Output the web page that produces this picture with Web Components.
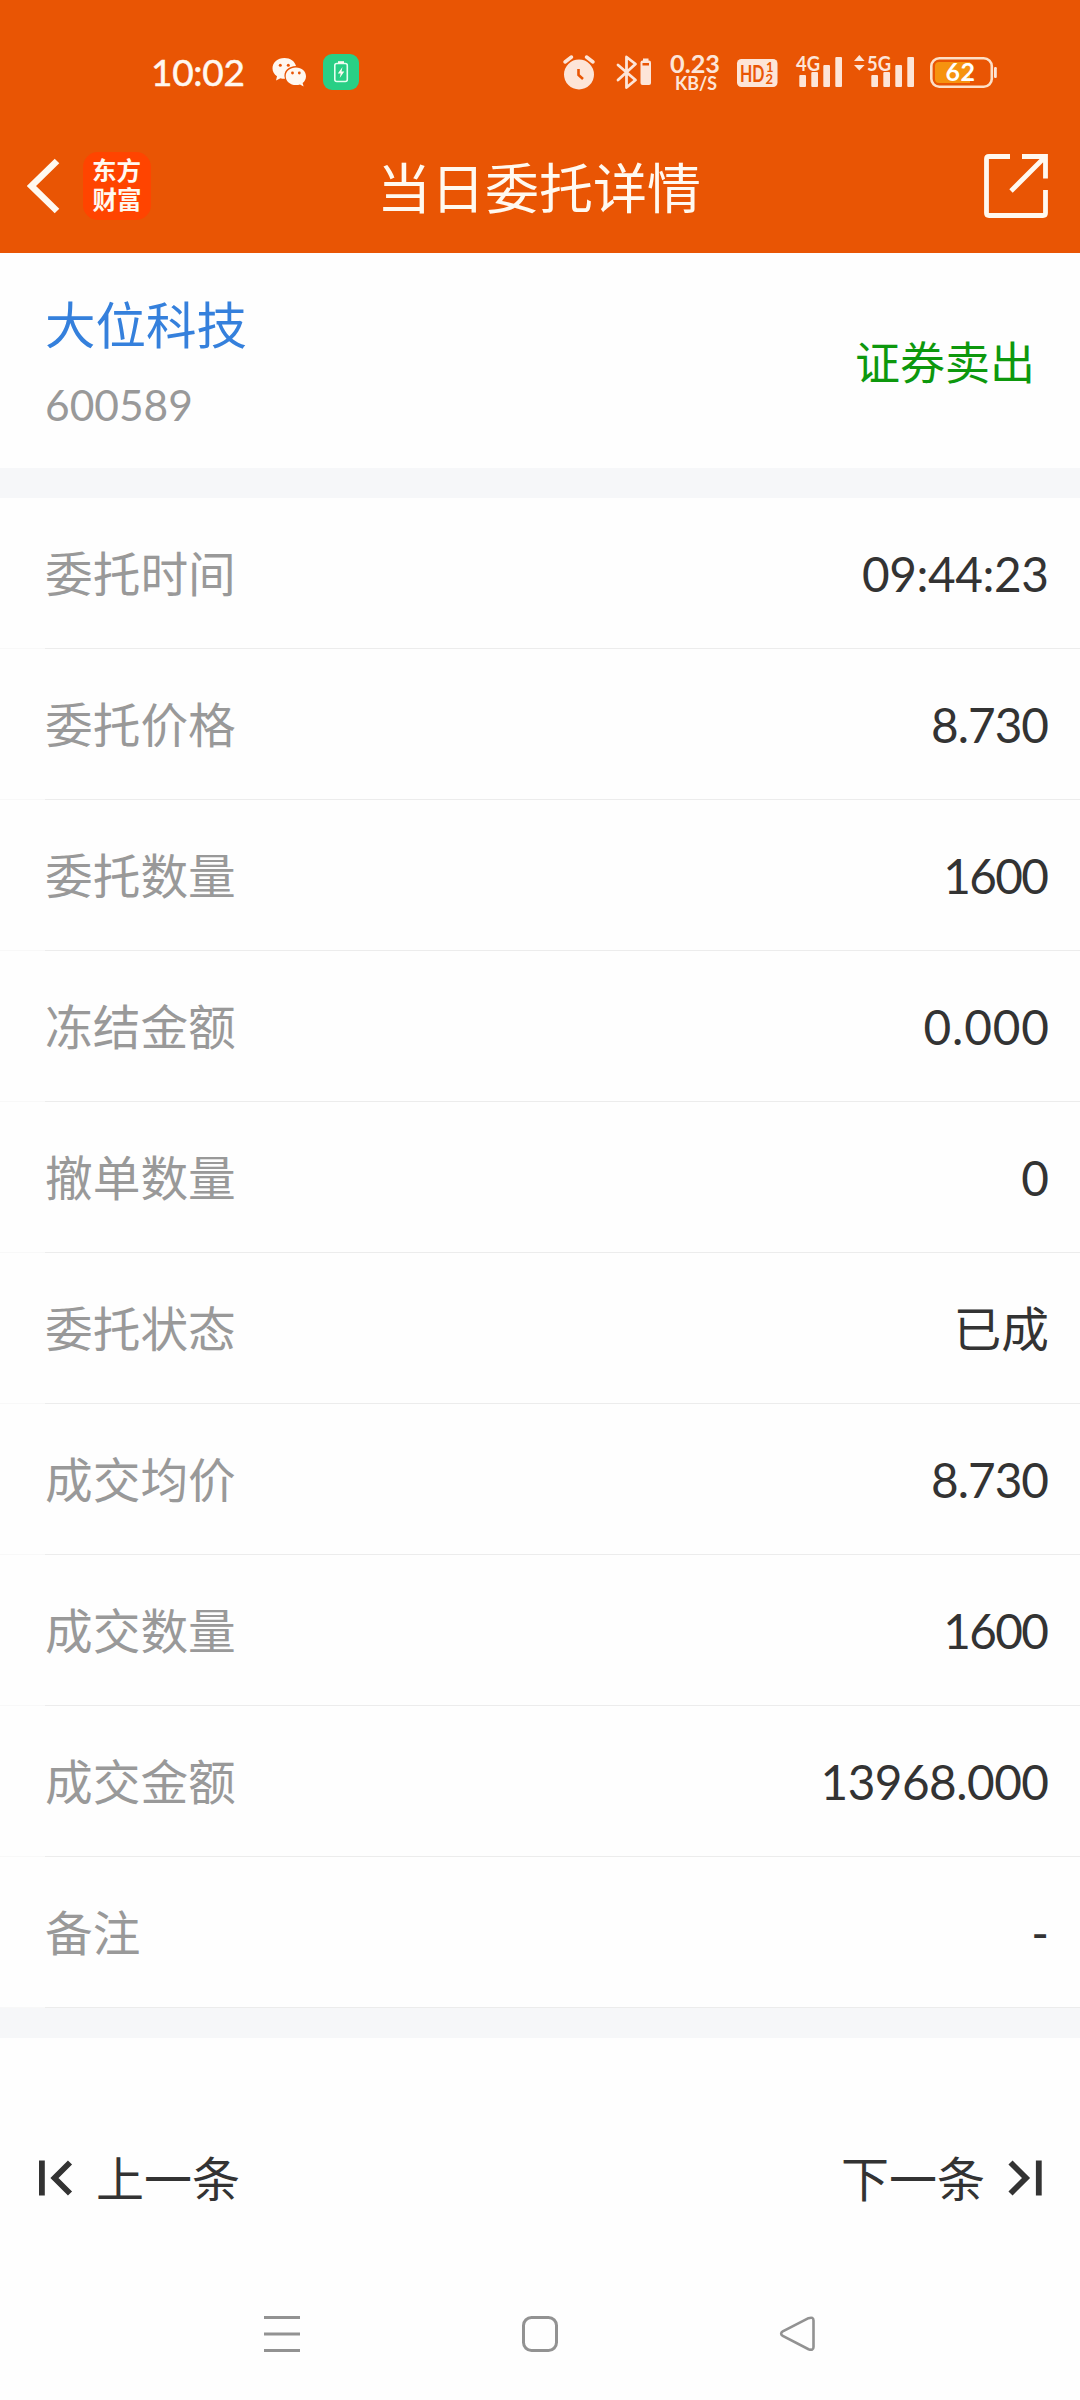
<!DOCTYPE html>
<html lang="zh-CN">
<head>
<meta charset="utf-8">
<title>当日委托详情</title>
<style>
  body {
    margin: 0;
    background: #fefefe;
    color: #333;
    font-family: Lato, "Noto Sans CJK SC", sans-serif;
  }
</style>
</head>
<body>
<order-page></order-page>

<script>
class StatusBar extends HTMLElement {
  constructor() {
    super();
    this.shadowDOM = this.attachShadow({ mode: "open" });
  }

  connectedCallback() {
    this.render();
  }

  render() {
    this.shadowDOM.innerHTML = `
        <style>
          :host {
            display: flex;
            justify-content: space-between;
            height: 116px;
            color: #fff8f0;
          }

          svg {
            display: block;
            font-family: Lato, sans-serif;
          }
        </style>
        <svg width="370" height="116" viewBox="0 0 370 116" fill="#fff8f0">
          <text x="151" y="86" font-size="37" stroke="#fff8f0" stroke-width="0.500" textLength="94" lengthAdjust="spacing">10:02</text>
          <path d="M284.500 58C277.500 58 272.500 62.500 272.500 68.300C272.500 71.700 274.200 74.500 277 76.300L276 80.500L280.500 78.200C282 78.600 283.200 78.800 285 78.700C282.500 71 289 66 296 66C294.800 61 290.300 58 284.500 58Z"/>
          <path d="M296 67.500C290 67.500 285.700 71.300 285.700 76.200C285.700 81.200 290 85 296 85C297.500 85 298.800 84.800 300 84.400L303.600 86.400L302.600 83C304.800 81.400 306 79 306 76.200C306 71.300 301.700 67.500 296 67.500Z"/>
          <g fill="#e95504">
            <circle cx="280.300" cy="65.200" r="1.500"/><circle cx="288.300" cy="65.200" r="1.500"/>
            <circle cx="292.500" cy="73" r="1.400"/><circle cx="299.300" cy="73" r="1.400"/>
          </g>
          <rect x="323" y="54" width="36" height="36" rx="9" fill="#29cf85"/>
          <rect x="334.800" y="63.500" width="12.500" height="18" rx="2" fill="none" stroke="#e4fff0" stroke-width="1.600"/>
          <rect x="338" y="61.200" width="6" height="2"/>
          <path d="M342.500 67L337.800 73.500H340.700L339.700 78L344.300 71.500H341.500Z"/>
        </svg>
        <svg width="530" height="116" viewBox="550 0 530 116" fill="#fde5d8">
          <circle cx="579" cy="74.500" r="15"/>
          <path d="M565 62L571.500 57M593 62L586.500 57" stroke="#fde5d8" stroke-width="3.500" stroke-linecap="round"/>
          <path d="M578.500 69V75L583 79" fill="none" stroke="#e95504" stroke-width="2.600"/>
          <path d="M618 65L635.500 80L626.500 87.500V57L635.500 64L618 80" fill="none" stroke="#fde5d8" stroke-width="2.800" stroke-linejoin="round" stroke-linecap="round"/>
          <rect x="640.500" y="60.500" width="10.500" height="24.500" rx="2"/>
          <rect x="643" y="58.500" width="5.500" height="3"/>
          <rect x="642.500" y="63" width="6.500" height="2.500" fill="#e95504"/>
          <text x="670" y="72.500" font-size="24.500" font-weight="700" textLength="50" lengthAdjust="spacingAndGlyphs">0.23</text>
          <text x="675" y="89.500" font-size="18.500" font-weight="700" textLength="42" lengthAdjust="spacingAndGlyphs">KB/S</text>
          <rect x="737" y="59" width="40.500" height="28" rx="4.500"/>
          <g fill="#e95504" font-weight="700">
            <text x="740" y="81.500" font-size="23" textLength="24.500" lengthAdjust="spacingAndGlyphs">HD</text>
            <text x="766" y="71.500" font-size="13">1</text>
            <text x="765.500" y="84" font-size="13">2</text>
          </g>
          <text x="796" y="70.500" font-size="21" font-weight="700" textLength="24" lengthAdjust="spacingAndGlyphs">4G</text>
          <text x="867" y="70.500" font-size="21" font-weight="700" textLength="24" lengthAdjust="spacingAndGlyphs">5G</text>
          <path d="M854 61L859.300 55L864.600 61ZM854 65L859.300 70.500L864.600 65Z"/>
          <g id="bars">
            <rect x="799.300" y="75" width="6.700" height="12" rx="1"/>
            <rect x="811.300" y="72" width="6.700" height="15" rx="1"/>
            <rect x="823.300" y="65" width="6.700" height="22" rx="1"/>
            <rect x="835.300" y="57" width="6.700" height="30" rx="1"/>
          </g>
          <use href="#bars" x="72"/>
          <path d="M939 62H970V83H939Q935 83 935 79V66Q935 62 939 62Z" fill="#f6930f"/>
          <rect x="931.300" y="58.300" width="60.500" height="28.400" rx="8" fill="none" stroke="#fde0c8" stroke-width="2.600"/>
          <rect x="994" y="67" width="2.800" height="11" rx="1.200"/>
          <text x="945.500" y="81.300" font-size="25" font-weight="700" fill="#fff" textLength="29.500" lengthAdjust="spacing">62</text>
        </svg>
      `;
  }
}

class TitleBar extends HTMLElement {
  constructor() {
    super();
    this.shadowDOM = this.attachShadow({ mode: "open" });
  }

  connectedCallback() {
    this.render();
  }

  render() {
    this.shadowDOM.innerHTML = `
        <style>
          :host {
            display: grid;
            grid-template-columns: 1fr auto 1fr;
            align-items: center;
            height: 137px;
            box-sizing: border-box;
            padding: 2px 32px 0 27px;
            color: #fff9f0;
          }

          .left {
            display: flex;
            align-items: center;
            gap: 22px;
          }

          svg {
            display: block;
          }

          .logo {
            width: 68px;
            height: 68px;
            box-sizing: border-box;
            padding-top: 4px;
            border-radius: 15px;
            background: #ff4400;
            font-size: 24.5px;
            font-weight: 700;
            line-height: 29px;
            text-align: center;
            text-indent: -1px;
          }

          h1 {
            margin: 6px 0 0 3px;
            font-size: 54px;
            font-weight: 400;
            line-height: 70px;
          }

          .share {
            justify-self: end;
          }
        </style>
        <div class="left">
          <svg width="34" height="56" viewBox="0 0 34 56" fill="none" stroke="#fff9f0" stroke-width="6.500">
            <path d="M30 3L4.500 28L30 53"/>
          </svg>
          <div class="logo">东方<br>财富</div>
        </div>
        <h1><slot></slot></h1>
        <svg class="share" width="64" height="64" viewBox="0 0 64 64" fill="none" stroke="#fff9f0" stroke-width="4.800">
          <path d="M26 2.500H5Q2.500 2.500 2.500 5V59Q2.500 61.500 5 61.500H59Q61.500 61.500 61.500 59V36"/>
          <path d="M38 2.500H61.500V24.500M61 3L27 37"/>
        </svg>
      `;
  }
}

class StockSummary extends HTMLElement {
  constructor() {
    super();
    this.shadowDOM = this.attachShadow({ mode: "open" });
  }

  connectedCallback() {
    this.render();
  }

  render() {
    this.shadowDOM.innerHTML = `
        <style>
          :host {
            display: flex;
            justify-content: space-between;
            height: 215px;
            box-sizing: border-box;
            padding: 37px 45px 0 45px;
          }

          .name {
            font-size: 50.5px;
            line-height: 70px;
            color: #3580dc;
          }

          .code {
            margin-top: 15px;
            font-size: 42.5px;
            line-height: 60px;
            color: #999;
          }

          .side {
            margin-top: 43px;
            font-size: 45px;
            line-height: 60px;
            color: #0d980d;
          }
        </style>
        <div>
          <div class="name"><slot name="name"></slot></div>
          <div class="code"><slot name="code"></slot></div>
        </div>
        <div class="side"><slot name="side"></slot></div>
      `;
  }
}

class DetailRow extends HTMLElement {
  constructor() {
    super();
    this.shadowDOM = this.attachShadow({ mode: "open" });
  }

  connectedCallback() {
    this.render();
  }

  render() {
    this.shadowDOM.innerHTML = `
        <style>
          :host {
            display: flex;
            flex-direction: column;
            height: 151px;
          }

          .row {
            display: flex;
            flex: 1;
            align-items: center;
            justify-content: space-between;
            padding: 2px 31px 0 45px;
            font-size: 47.7px;
            line-height: 70px;
          }

          .label {
            color: #999;
          }

          .value {
            letter-spacing: var(--spacing, 0);
            margin-right: calc(var(--spacing, 0px) * -1);
          }

          .line {
            height: 1px;
            background: linear-gradient(90deg, #f8f8f8 45px, #ececec 45px);
          }
        </style>
        <div class="row">
          <span class="label">${this.getAttribute("label")}</span>
          <span class="value"><slot></slot></span>
        </div>
        <div class="line"></div>
      `;
  }
}

class SectionGap extends HTMLElement {
  constructor() {
    super();
    this.shadowDOM = this.attachShadow({ mode: "open" });
    this.shadowDOM.innerHTML = `
        <style>
          :host {
            display: block;
            height: 30px;
            background: #f6f7f9;
          }
        </style>
      `;
  }
}

class OrderPager extends HTMLElement {
  constructor() {
    super();
    this.shadowDOM = this.attachShadow({ mode: "open" });
  }

  connectedCallback() {
    this.render();
  }

  render() {
    this.shadowDOM.innerHTML = `
        <style>
          :host {
            display: flex;
            align-items: center;
            justify-content: space-between;
            height: 280px;
            padding: 0 38px 0 39px;
            font-size: 48px;
            line-height: 70px;
          }

          div {
            display: flex;
            align-items: center;
            gap: 23px;
          }

          span {
            padding-top: 2px;
          }

          svg {
            display: block;
          }
        </style>
        <div>
          <svg width="34" height="36" viewBox="0 0 34 36" fill="none" stroke="#333" stroke-width="5.800">
            <path d="M2.900 0.500V35.500M31 2.500L15.500 18L31 33.500"/>
          </svg>
          <span>上一条</span>
        </div>
        <div>
          <span>下一条</span>
          <svg width="34" height="36" viewBox="0 0 34 36" fill="none" stroke="#333" stroke-width="5.800">
            <path d="M30.800 0.500V35.500M2.500 2.500L18 18L2.500 33.500"/>
          </svg>
        </div>
      `;
  }
}

class SystemNav extends HTMLElement {
  constructor() {
    super();
    this.shadowDOM = this.attachShadow({ mode: "open" });
    this.shadowDOM.innerHTML = `
        <style>
          :host {
            display: flex;
            justify-content: space-between;
            align-items: center;
            height: 32px;
            padding: 0 264px;
          }

          svg {
            display: block;
            overflow: visible;
          }
        </style>
        <svg width="36" height="36" viewBox="0 0 36 36" fill="none" stroke="#929292" stroke-width="3">
          <path d="M0 1.500H36M0 18H36M0 34.500H36"/>
        </svg>
        <svg width="36" height="36" viewBox="0 0 36 36" fill="none" stroke="#929292" stroke-width="3">
          <rect x="1.500" y="1.500" width="33" height="33" rx="8"/>
        </svg>
        <svg width="36" height="36" viewBox="0 0 36 36" fill="none" stroke="#929292" stroke-width="2.600">
          <path d="M28.500 2.200L2.800 15.300Q-0.500 17.600 2.800 20L28.500 33.200Q33.500 35 33.500 31V4.500Q33.500 0.500 28.500 2.200Z"/>
        </svg>
      `;
  }
}

class OrderPage extends HTMLElement {
  constructor() {
    super();
    this.shadowDOM = this.attachShadow({ mode: "open" });
  }

  connectedCallback() {
    this.render();
  }

  render() {
    this.shadowDOM.innerHTML = `
        <style>
          :host {
            display: flex;
            flex-direction: column;
            width: 1080px;
            height: 2400px;
            overflow: hidden;
          }

          header {
            background: #e95504;
          }
        </style>
        <header>
          <status-bar></status-bar>
          <title-bar>当日委托详情</title-bar>
        </header>
        <stock-summary>
          <span slot="name">大位科技</span>
          <span slot="code">600589</span>
          <span slot="side">证券卖出</span>
        </stock-summary>
        <section-gap></section-gap>
        <detail-row label="委托时间" style="--spacing: -0.4px">09:44:23</detail-row>
        <detail-row label="委托价格" style="--spacing: -1px">8.730</detail-row>
        <detail-row label="委托数量" style="--spacing: -1.6px">1600</detail-row>
        <detail-row label="冻结金额" style="--spacing: 0.9px">0.000</detail-row>
        <detail-row label="撤单数量">0</detail-row>
        <detail-row label="委托状态">已成</detail-row>
        <detail-row label="成交均价" style="--spacing: -1px">8.730</detail-row>
        <detail-row label="成交数量" style="--spacing: -1.6px">1600</detail-row>
        <detail-row label="成交金额" style="--spacing: -0.5px">13968.000</detail-row>
        <detail-row label="备注">-</detail-row>
        <section-gap></section-gap>
        <order-pager></order-pager>
        <system-nav></system-nav>
      `;
  }
}

customElements.define("status-bar", StatusBar);
customElements.define("title-bar", TitleBar);
customElements.define("stock-summary", StockSummary);
customElements.define("detail-row", DetailRow);
customElements.define("section-gap", SectionGap);
customElements.define("order-pager", OrderPager);
customElements.define("system-nav", SystemNav);
customElements.define("order-page", OrderPage);
</script>
</body>
</html>
